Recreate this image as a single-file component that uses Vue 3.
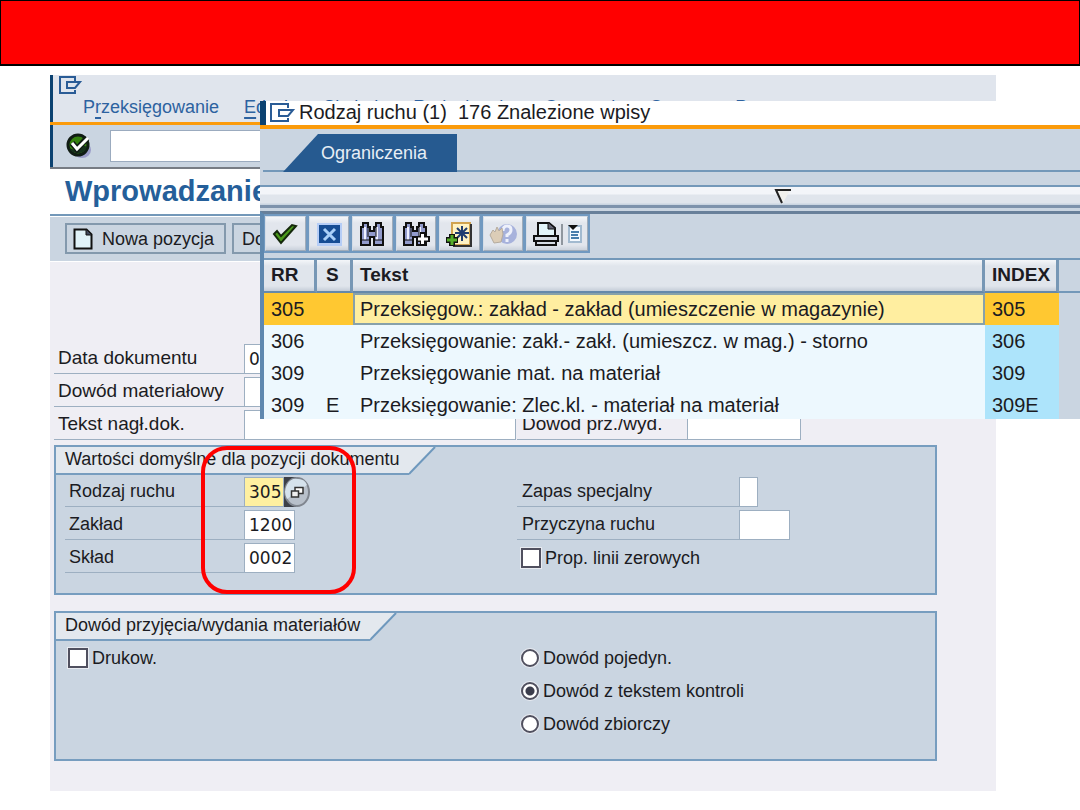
<script setup>
import { ref } from 'vue'

const menus = ['Edycja', 'Skok do', 'Rodzaj ruchu', 'Otoczenie', 'System', 'Pomoc']
const rows = [
  { rr: '305', s: '', text: 'Przeksięgow.: zakład - zakład (umieszczenie w magazynie)', index: '305' },
  { rr: '306', s: '', text: 'Przeksięgowanie: zakł.- zakł. (umieszcz. w mag.) - storno', index: '306' },
  { rr: '309', s: '', text: 'Przeksięgowanie mat. na materiał', index: '309' },
  { rr: '309', s: 'E', text: 'Przeksięgowanie: Zlec.kl. - materiał na materiał', index: '309E' }
]
const slips = ['Dowód pojedyn.', 'Dowód z tekstem kontroli', 'Dowód zbiorczy']
const slip = ref(slips[1])
const date = ref('0')
const movement = ref('305')
const plant = ref('1200')
const storage = ref('0002')
</script>

<template>
  <div class="slide">
    <div class="banner"></div>

    <main class="window">
      <header class="top">
        <svg class="exit" viewBox="0 0 24 18" width="24" height="18" fill="none" stroke="#2a5c96" stroke-width="2">
          <path d="M16 5V1H1v16h15v-3" /><path d="M8 6h13l-5 6H8z" />
        </svg>
        <nav class="menu">
          <a href="#">P<u>r</u>zeksięgowanie</a>
          <a v-for="m in menus" :key="m" href="#"><u>{{ m[0] }}</u>{{ m.slice(1) }}</a>
        </nav>
      </header>
      <div class="command">
        <button class="enter" aria-label="Enter">
          <svg viewBox="0 0 26 26" width="26" height="26">
            <ellipse cx="16" cy="17" rx="9" ry="8" fill="#9a9cc8" />
            <circle cx="12" cy="12" r="10" fill="#35820f" stroke="#101c14" stroke-width="3" />
            <path d="M3 15a10 10 0 0 0 18-1l-4-2-6 6z" fill="#16301c" />
            <path d="M6 10l5 6L21 5" fill="none" stroke="#101c14" stroke-width="6" />
            <path d="M6 10l5 6L22 5" fill="none" stroke="#fff" stroke-width="3" />
          </svg>
        </button>
        <input class="cmd" aria-label="Polecenie">
      </div>
      <h1>Wprowadzanie</h1>
      <div class="tools">
        <button>
          <svg viewBox="0 0 20 22" width="20" height="22">
            <path d="M1.500 1.500h12l5 5v14h-17z" fill="#e0f2f8" stroke="#111" stroke-width="2" />
            <path d="M13 1v6h6z" fill="#40485c" stroke="#111" />
          </svg>
          Nowa pozycja
        </button>
        <button>Do rezerwacji...</button>
      </div>

      <div class="body">
        <div class="head">
          <div class="line first"><label for="date">Data dokumentu</label><input id="date" v-model="date" class="w-date"></div>
          <div class="line first"><label for="slip">Dowód materiałowy</label><input id="slip" class="w-date"></div>
          <div class="pair">
            <div class="line first"><label for="note">Tekst nagł.dok.</label><input id="note" class="w-note"></div>
            <div class="line second"><label for="receipt">Dowód prz./wyd.</label><input id="receipt" class="w-receipt"></div>
          </div>
        </div>

        <section class="panel">
          <div class="tab">
            <h2>Wartości domyślne dla pozycji dokumentu</h2>
            <svg viewBox="0 0 28 28" width="28" height="28"><path d="M0 0h26L0 27z" fill="#e3e8ee" /><path d="M26 0L0 27" stroke="#6e98bd" stroke-width="2" /></svg>
          </div>
          <div class="columns">
            <div>
              <div class="line inner">
                <label for="mv">Rodzaj ruchu</label><input id="mv" v-model="movement" class="w3 active">
                <button class="match" aria-label="Lista wartości">
                  <svg viewBox="0 0 26 30" width="26" height="30">
                    <path d="M0 0h12v30H0z" fill="#3c4048" />
                    <ellipse cx="13" cy="15" rx="12" ry="14" fill="#b8c0ca" stroke="#80868f" stroke-width="2" />
                    <path d="M3 22A11 13 0 0 1 14 2q7 0 9 6z" fill="#d5e2ec" />
                    <path d="M11 10.500h8v6h-8z" fill="#fff" stroke="#333" stroke-width="1.500" />
                    <path d="M7.500 14h7v6h-7z" fill="#eee" stroke="#333" stroke-width="1.500" />
                  </svg>
                </button>
              </div>
              <div class="line inner"><label for="plant">Zakład</label><input id="plant" v-model="plant" class="w4"></div>
              <div class="line inner"><label for="store">Skład</label><input id="store" v-model="storage" class="w4"></div>
            </div>
            <div>
              <div class="line right"><label for="special">Zapas specjalny</label><input id="special" class="w1"></div>
              <div class="line right"><label for="reason">Przyczyna ruchu</label><input id="reason" class="w4"></div>
              <label class="choice"><input type="checkbox">Prop. linii zerowych</label>
            </div>
          </div>
          <div class="highlight"></div>
        </section>

        <section class="panel">
          <div class="tab">
            <h2>Dowód przyjęcia/wydania materiałów</h2>
            <svg viewBox="0 0 28 28" width="28" height="28"><path d="M0 0h26L0 27z" fill="#e3e8ee" /><path d="M26 0L0 27" stroke="#6e98bd" stroke-width="2" /></svg>
          </div>
          <div class="columns">
            <div><label class="choice"><input type="checkbox">Drukow.</label></div>
            <div>
              <label v-for="s in slips" :key="s" class="choice"><input v-model="slip" type="radio" name="slip" :value="s">{{ s }}</label>
            </div>
          </div>
        </section>
      </div>
    </main>

    <aside class="popup">
      <div class="caption">
        <svg viewBox="0 0 26 19" width="26" height="19" fill="none" stroke="#2a5c96" stroke-width="2">
          <path d="M18 5V1H1v17h17v-3" /><path d="M9 7h14l-5 6H9z" />
        </svg>
        <span>Rodzaj ruchu (1)&nbsp; 176 Znalezione wpisy</span>
      </div>
      <div class="tabs"><button>Ograniczenia</button></div>
      <div class="splitter">
        <svg viewBox="0 0 18 16" width="18" height="16"><path d="M2 2h14L9 15z" fill="#f1f1ee" /><path d="M17 2H2l6 13" fill="none" stroke="#222" stroke-width="2" /></svg>
      </div>
      <div class="content">
        <div class="actions">
          <button aria-label="Kopiuj">
            <svg viewBox="0 0 30 30" width="30" height="30"><path d="M4 15l3-3 4 5L22 6l4 1-15 17z" fill="#4a9a1c" stroke="#14280c" stroke-width="2" /></svg>
          </button>
          <button aria-label="Zamknij">
            <svg viewBox="0 0 30 30" width="30" height="30"><path d="M3 4h25v23H3z" fill="#b5cdf6" /><path d="M5 6h21v18H5z" fill="#164d94" /><path d="M10 10l11 11M21 10L10 21" stroke="#a9d0f8" stroke-width="3" /></svg>
          </button>
          <button aria-label="Szukaj">
            <svg viewBox="0 0 30 30" width="30" height="30"><path d="M6 4h5v4h2v4h4V8h2V4h5v4h2v18h-9v-8h-4v8H4V8h2z" fill="#929bcc" stroke="#111" stroke-width="2" /><path d="M7 8h2v13H7M19 8h2v13h-2" fill="#eef0ff" /><path d="M5 21h7M18 21h7M11 8v10M19 8v10" stroke="#111" /></svg>
          </button>
          <button aria-label="Szukaj dalej">
            <svg viewBox="0 0 30 30" width="30" height="30"><path d="M5 4h5v4h2v4h4V8h2V4h5v4h2v18h-9v-8h-4v8H3V8h2z" fill="#929bcc" stroke="#111" stroke-width="2" /><path d="M6 8h2v13H6M18 8h2v8h-2" fill="#eef0ff" /><path d="M4 21h7M10 8v10M18 8v10" stroke="#111" /><path d="M19 13h5v4h5v6h-5v4h-5v-4h-4v-6h4z" fill="#111" /><path d="M21.500 15v10M17 20h10" stroke="#fff" stroke-width="3" /></svg>
          </button>
          <button aria-label="Dodaj do ulubionych">
            <svg viewBox="0 0 30 30" width="30" height="30"><path d="M8 4h18v22H8z" fill="#fff2c4" stroke="#d0a250" stroke-width="2" /><path d="M27 5v22H9" fill="none" stroke="#333" stroke-width="2" /><path d="M18 7v15M11 14h14M13 9l10 10M23 9L13 19" stroke="#203c70" stroke-width="2" /><path d="M8 15v12M2 21h12" stroke="#111" stroke-width="6" /><path d="M8 16v10M3 21h10" stroke="#55ad28" stroke-width="3" /></svg>
          </button>
          <button aria-label="Pomoc">
            <svg viewBox="0 0 30 30" width="30" height="30"><circle cx="19" cy="15" r="10" fill="#a7b2dc" /><path d="M15 12q0-5 4-5t4 4q0 3-4 5v2M19 20v3" fill="none" stroke="#eef1fb" stroke-width="3" /><path d="M2 16l3-5 2 2 2-5 2 4 3-3 1 6-2 8-7 1z" fill="#dccdb7" stroke="#b5ab9e" /></svg>
          </button>
          <button aria-label="Drukuj">
            <svg viewBox="0 0 54 30" width="54" height="30"><path d="M8 17V4h11l6 5v8z" fill="#e3f5fa" stroke="#111" stroke-width="2" /><path d="M18 4v6h7" fill="#667" stroke="#111" /><path d="M4 17h24v5H4zM6 22h20v4H6z" fill="#d5dbe4" stroke="#111" stroke-width="2" /><path d="M32 5v21" stroke="#8f969e" stroke-width="2" /><path d="M39 7h12v16H39z" fill="#f4f9ff" stroke="#a2bad0" stroke-width="2" /><path d="M38 6h10l-5 5z" fill="#111" /><path d="M41 13h8M41 16h7M41 19h8" stroke="#487dac" stroke-width="2" /></svg>
          </button>
        </div>
        <table>
          <colgroup><col class="c-rr"><col class="c-s"><col><col class="c-index"><col class="c-rest"></colgroup>
          <thead><tr><th>RR</th><th>S</th><th>Tekst</th><th>INDEX</th><td class="rest"></td></tr></thead>
          <tbody>
            <tr v-for="(r, i) in rows" :key="r.index" :class="{ selected: i === 0 }">
              <td>{{ r.rr }}</td><td>{{ r.s }}</td><td>{{ r.text }}</td><td>{{ r.index }}</td><td class="rest"></td>
            </tr>
          </tbody>
        </table>
      </div>
    </aside>
  </div>
</template>

<style>
body { background: #fff; }
</style>

<style scoped>
* { box-sizing: border-box; }
.slide { position: relative; min-height: 100vh; overflow: hidden; font: 18px/24px "Liberation Sans", Arial, sans-serif; color: #1b1b22; }
input, button { margin: 0; padding: 0; font: inherit; color: inherit; border: 0; border-radius: 0; outline: 0; background: none; }
svg { display: block; flex: none; }
.banner { height: 66px; background: #f00; border: 1px solid #000; border-bottom-width: 2px; }
.window { margin: 9px 84px 0 50px; background: #efeef4; }

.top { height: 50px; padding: 1px 0 0 9px; background: #e0e5ed; box-shadow: inset 3px 0 #0b4271; border-bottom: 3px solid #fb9b0b; overflow: hidden; }
.menu { display: flex; gap: 25px; padding: 1px 0 0 24px; white-space: nowrap; }
.menu a { color: #2d62a0; text-decoration: none; }
.menu u { text-underline-offset: 4px; text-decoration-thickness: 2px; }
.command { display: flex; align-items: center; gap: 18px; height: 44px; padding-left: 16px; background: #cad5e1; box-shadow: inset 3px 0 #0b4271; border-bottom: 2px solid #777c84; }
.cmd { width: 300px; height: 32px; background: #fff; border: 1px solid #9babbf; }
h1 { margin: 0; height: 47px; padding: 0 0 0 15px; font-size: 29px; line-height: 44px; font-weight: bold; color: #255f9a; background: #fff; border-bottom: 2px solid #7398b9; }
.tools { display: flex; gap: 6px; height: 46px; padding: 6px 0 7px 15px; background: #cad5e1; border-top: 1px solid #fff; border-bottom: 1px solid #fff; }
.tools button { display: flex; align-items: center; gap: 9px; padding: 0 10px 0 6px; border: 2px solid #8399ad; white-space: nowrap; }
.tools button + button { padding-left: 8px; }

.body { padding: 80px 59px 30px 4px; }
.pair { display: flex; gap: 1px; }
.line { display: flex; align-items: center; height: 33px; }
.line label { height: 30px; padding-left: 4px; border-bottom: 1px solid #9dafc1; line-height: 28px; white-space: nowrap; }
.line input { height: 30px; padding: 0 0 0 4px; background: #fff; border: 1px solid #9dafc1; font-family: "DejaVu Sans", sans-serif; font-size: 17px; }
.head label { font-size: 19px; }
.line.first label { width: 190px; }
.line.second label { width: 170px; padding-left: 5px; }
.line.inner { padding-left: 9px; }
.line.inner label { width: 179px; }
.line.right label { width: 222px; padding-left: 5px; }
.w-date { width: 120px; }
.w-note { width: 272px; }
.w-receipt { width: 114px; }
.line .w1 { width: 19px; }
.w3 { width: 40px; }
.w4 { width: 51px; }
.line .active { background: #fff0a0; }
.match { width: 26px; height: 30px; }

.panel { position: relative; height: 150px; margin-top: 4px; background: #cad5e1; border: 2px solid #779dbf; }
.panel + .panel { margin-top: 16px; }
.tab { display: flex; height: 28px; }
h2 { margin: 0; padding: 0 10px 0 9px; font-size: 18px; font-weight: normal; line-height: 24px; background: #e3e8ee; border-bottom: 2px solid #779dbf; white-space: nowrap; }
.columns { display: grid; grid-template-columns: 461px 1fr; }
.choice { display: flex; align-items: center; gap: 4px; height: 33px; padding-left: 4px; white-space: nowrap; }
.columns > div:first-child .choice { padding-left: 12px; }
.choice input { appearance: none; width: 20px; height: 20px; background: #fff; border: 2px solid #50505f; box-shadow: 0 0 0 1px #e8ebf1; }
.choice input[type="checkbox"]:checked { background: #50505f; box-shadow: inset 0 0 0 3px #fff; }
.choice input[type="radio"] { width: 18px; height: 18px; border-radius: 50%; }
.choice input[type="radio"]:checked { background: radial-gradient(circle, #3b3d4c 4px, #fff 5px); }
.highlight { position: absolute; left: 145px; top: -1px; width: 155px; height: 148px; border: 4px solid #f00; border-radius: 26px; pointer-events: none; }

.popup { position: absolute; z-index: 2; left: 260px; right: 0; top: 101px; max-height: 318px; overflow: hidden; background: #cad5e1; }
.caption { display: flex; align-items: center; gap: 3px; height: 28px; padding: 0 0 2px 10px; background: #fff; box-shadow: inset 6px 0 #0b4271; border-bottom: 4px solid #fb9b0b; font-size: 20px; white-space: nowrap; }
.tabs { height: 43px; margin-left: 3px; padding-top: 5px; border-bottom: 2px solid #7398b9; }
.tabs button { height: 38px; padding: 0 30px 0 38px; margin-left: 20px; color: #e7eef5; background: #265a90; clip-path: polygon(35px 0, 100% 0, 100% 100%, 0 100%); }
.splitter { display: flex; align-items: center; justify-content: center; height: 23px; margin-top: 13px; padding-left: 226px; background: linear-gradient(#f3f5f9 7px, #e0e5ec 8px 16px, #cad5e1 17px); border-top: 2px solid #7398b9; border-bottom: 3px solid #7e93ac; }
.content { margin-top: 3px; border-left: 4px solid #5f88af; border-top: 3px solid #68809a; }
.actions { display: grid; grid-template-columns: repeat(6, 1fr) 62px; gap: 3px; width: 326px; height: 39px; padding: 2px 2px 2px 1px; background: #7199c0; }
.actions button { display: flex; align-items: center; justify-content: center; background: linear-gradient(#f4f6f9, #e2e6ed 6px 28px, #cbd2dc); border: 1px solid #d5dde7; border-right-color: #a0acba; border-bottom-color: #a0acba; }
table { width: 100%; margin-top: 5px; table-layout: fixed; border-collapse: separate; border-spacing: 0; border-top: 2px solid #7398b9; font-size: 20px; }
.c-rr { width: 53px; }
.c-s { width: 36px; }
.c-index { width: 74px; }
.c-rest { width: 21px; }
th { height: 33px; padding: 0 0 2px 7px; font-size: 19px; text-align: left; background: linear-gradient(#f4f6f9, #e0e5ec 6px 26px, #c5cdd8); border-right: 3px solid #7797b5; border-bottom: 2px solid #6689aa; }
td { height: 32px; padding: 0 7px; background: #edf8fe; white-space: nowrap; }
th:nth-child(2), td:nth-child(2) { padding-left: 9px; }
td:nth-child(4) { background: #ade4fb; }
.selected td { background: #ffc831; }
.selected td:nth-child(3) { background: #ffeea0; box-shadow: inset 0 0 0 2px #87a1aa; }
td.rest, .selected td.rest { background: #cad5e1; }
thead .rest { border-bottom: 2px solid #7398b9; }
</style>
